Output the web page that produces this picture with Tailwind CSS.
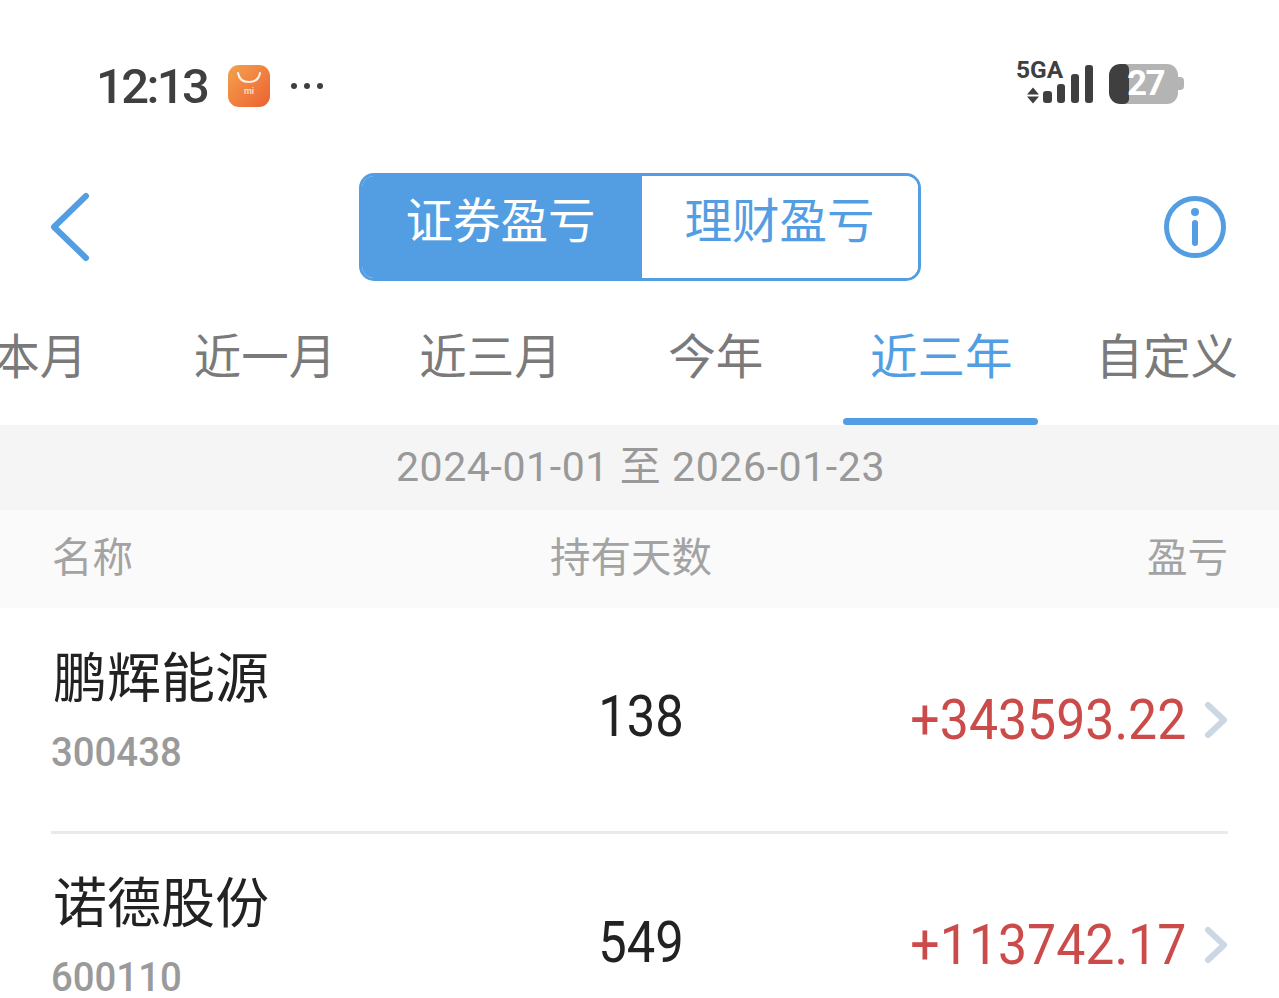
<!DOCTYPE html>
<html lang="zh">
<head>
  <meta charset="UTF-8" />
  <meta name="viewport" content="width=device-width,initial-scale=1" />
  <title>盈亏</title>
  <script src="https://cdn.jsdelivr.net/npm/@tailwindcss/browser@4"></script>
</head>
<body class="bg-white overflow-hidden h-[998px] font-['Roboto','Noto_Sans_CJK_SC',sans-serif]">
  <!-- status bar -->
  <div class="h-[173px] flex items-start justify-between pl-[96px] pr-[95px] pt-[62px]">
    <div class="flex items-center h-[46px] pt-[2px]">
      <span class="w-[132px] text-[49px] leading-none font-medium text-[#3f3f3f] tracking-[-2.6px]">12:13</span>
      <div class="w-[42px] h-[42px] rounded-[11px] bg-gradient-to-br from-[#f2a24f] to-[#ec5f30] flex flex-col items-center">
        <svg width="26" height="14" viewBox="0 0 26 14" class="mt-[6px]"><path d="M2 2c1 6 5 9 11 9s10-3 11-9" fill="none" stroke="#fff" stroke-opacity=".9" stroke-width="2" stroke-linecap="round"/></svg>
        <span class="text-[9px] leading-none text-white/80 mt-[2px] font-medium">mi</span>
      </div>
      <div class="ml-[21px] flex gap-[7px]">
        <span class="w-[6px] h-[6px] rounded-full bg-[#3f3f3f]"></span>
        <span class="w-[6px] h-[6px] rounded-full bg-[#3f3f3f]"></span>
        <span class="w-[6px] h-[6px] rounded-full bg-[#3f3f3f]"></span>
      </div>
    </div>
    <div class="flex items-start h-[46px]">
      <svg width="78" height="42" viewBox="0 0 78 42" class="overflow-visible">
        <text x="0" y="16" font-family="Roboto" font-weight="700" font-size="24.5" fill="#3f3f3f">5GA</text>
        <path d="M11 32.500l6-7 6 7zM11 34.500l6 7 6-7z" fill="#3f3f3f"/>
        <rect x="27" y="29" width="9" height="12" rx="3" fill="#3f3f3f"/>
        <rect x="41" y="22" width="8" height="19" rx="3" fill="#3f3f3f"/>
        <rect x="55" y="12" width="8" height="29" rx="3" fill="#3f3f3f"/>
        <rect x="69" y="3" width="8" height="38" rx="3" fill="#3f3f3f"/>
      </svg>
      <div class="ml-[15px] mt-[2px] relative w-[69px] h-[40px] rounded-[11px] bg-[#b4b4b4] overflow-hidden">
        <div class="absolute left-0 top-0 bottom-0 w-[20px] bg-[#3f3f3f] rounded-l-[11px] rounded-r-[5px]"></div>
        <span class="absolute left-[18px] top-[4px] text-[35px] leading-[32px] font-bold text-white tracking-[-1.5px]">27</span>
      </div>
      <div class="mt-[15px] w-[6px] h-[13px] bg-[#b4b4b4] rounded-r-[4px]"></div>
    </div>
  </div>

  <!-- title row -->
  <div class="relative h-[108px] flex justify-center">
    <svg class="absolute left-[49px] top-[19px]" width="42" height="70" viewBox="0 0 42 70">
      <path d="M37 4L5 35l32 31" fill="none" stroke="#539ee2" stroke-width="6" stroke-linecap="round" stroke-linejoin="round"/>
    </svg>
    <div class="w-[562px] h-[108px] flex rounded-[15px] border-[3px] border-[#539ee2] overflow-hidden">
      <div class="w-[280px] pr-[2px] bg-[#539ee2] text-white text-[47.5px] leading-[92px] text-center">证券盈亏</div>
      <div class="flex-1 bg-white text-[#539ee2] text-[47.5px] leading-[92px] text-center">理财盈亏</div>
    </div>
    <svg class="absolute left-[1163px] top-[22px]" width="64" height="64" viewBox="0 0 64 64">
      <circle cx="32" cy="32" r="28.5" fill="none" stroke="#539ee2" stroke-width="5"/>
      <circle cx="32" cy="17" r="4" fill="#539ee2"/>
      <path d="M32 28v20" stroke="#539ee2" stroke-width="6" stroke-linecap="round"/>
    </svg>
  </div>

  <!-- period tabs -->
  <div class="h-[144px] flex ml-[-73px] w-[1400px] text-[47.5px] text-[#7a7a7a]">
    <div class="w-[225.4px] pt-[47px] leading-[60px] text-center">本月</div>
    <div class="w-[225.4px] pt-[47px] leading-[60px] text-center">近一月</div>
    <div class="w-[225.4px] pt-[47px] leading-[60px] text-center">近三月</div>
    <div class="w-[225.4px] pt-[47px] leading-[60px] text-center">今年</div>
    <div class="w-[225.4px] pt-[47px] leading-[60px] text-center text-[#539ee2] relative">
      近三年
      <span class="absolute left-[14px] right-[16px] bottom-0 h-[7px] bg-[#539ee2] rounded-full"></span>
    </div>
    <div class="w-[225.4px] pt-[47px] leading-[60px] text-center">自定义</div>
  </div>

  <!-- date range -->
  <div class="h-[85px] bg-[#f5f5f5] flex items-center justify-center pl-[2px] text-[41px] text-[#999999] tracking-[0.6px]">2024-01-01 至 2026-01-23</div>

  <!-- column header -->
  <div class="h-[98px] bg-[#fafafa] pl-[52px] pr-[51px] pb-[2px] flex items-center text-[40.5px] text-[#a3a3a3]">
    <div class="w-[498px]">名称</div>
    <div class="flex-1">持有天数</div>
    <div>盈亏</div>
  </div>

  <!-- rows -->
  <div class="mx-[51px]">
    <div class="h-[226px] border-b-[3px] border-[#e8eaec] flex items-center">
      <div class="w-[480px] pb-[18px] pl-[2px]">
        <div class="text-[54px] leading-[70px] text-[#222222]">鹏辉能源</div>
        <div class="ml-[-2px] text-[41px] leading-[50px] mt-[12px] text-[#9a9a9a] font-medium origin-left scale-x-[.935]">300438</div>
      </div>
      <div class="w-[220px] pb-[6px] text-center text-[57px] leading-none text-[#222222] scale-x-[.89]">138</div>
      <div class="flex-1 flex items-center justify-end text-[52px] leading-none text-[#cb4a4a]">
        <span class="text-[56px] origin-right scale-x-[.925]">+343593.22</span>
        <svg class="ml-[18px]" width="24" height="38" viewBox="0 0 24 38"><path d="M4 4l16 15L4 34" fill="none" stroke="#cbd7e2" stroke-width="6" stroke-linecap="round" stroke-linejoin="round"/></svg>
      </div>
    </div>
    <div class="h-[222px] flex items-center">
      <div class="w-[480px] pb-[18px] pl-[2px]">
        <div class="text-[54px] leading-[70px] text-[#222222]">诺德股份</div>
        <div class="ml-[-2px] text-[41px] leading-[50px] mt-[12px] text-[#9a9a9a] font-medium origin-left scale-x-[.935]">600110</div>
      </div>
      <div class="w-[220px] pb-[6px] text-center text-[57px] leading-none text-[#222222] scale-x-[.89]">549</div>
      <div class="flex-1 flex items-center justify-end text-[52px] leading-none text-[#cb4a4a]">
        <span class="text-[56px] origin-right scale-x-[.925]">+113742.17</span>
        <svg class="ml-[18px]" width="24" height="38" viewBox="0 0 24 38"><path d="M4 4l16 15L4 34" fill="none" stroke="#cbd7e2" stroke-width="6" stroke-linecap="round" stroke-linejoin="round"/></svg>
      </div>
    </div>
  </div>
</body>
</html>
